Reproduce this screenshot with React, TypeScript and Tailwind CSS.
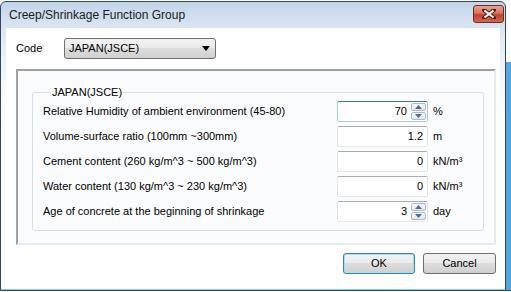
import React from 'react';

const BTN_BG = 'bg-[linear-gradient(#f2f2f2,#ebebeb_45%,#dddddd_50%,#cfcfcf)]';

type Row = { label: string; value: string; unit: string; spin?: boolean; focused?: boolean };

const ROWS: Row[] = [
  { label: 'Relative Humidity of ambient environment (45-80)', value: '70', unit: '%', spin: true, focused: true },
  { label: 'Volume-surface ratio (100mm ~300mm)', value: '1.2', unit: 'm' },
  { label: 'Cement content (260 kg/m^3 ~ 500 kg/m^3)', value: '0', unit: 'kN/m³' },
  { label: 'Water content (130 kg/m^3 ~ 230 kg/m^3)', value: '0', unit: 'kN/m³' },
  { label: 'Age of concrete at the beginning of shrinkage', value: '3', unit: 'day', spin: true },
];

function SpinButton({ up }: { up?: boolean }) {
  return (
    <div className="flex-1 flex items-center justify-center border border-[#b2bbc9] rounded-[2px] bg-[linear-gradient(#f7f8fa,#e3e7ee)]">
      <svg width="7" height="4" viewBox="0 0 7 4">
        {up ? <path d="M0 4 L3.5 0 L7 4 Z" fill="#4f6c96" /> : <path d="M0 0 L3.5 4 L7 0 Z" fill="#4f6c96" />}
      </svg>
    </div>
  );
}

function ValueBox({ row }: { row: Row }) {
  const border = row.focused
    ? 'border-[#a8cbe6] border-t-[#3d7bad]'
    : 'border-[#e2e3ea] border-t-[#abadb3] border-b-[#e3e9ef]';
  return (
    <div className="flex items-center gap-[5px]">
      <div className={`w-[91px] h-[21px] flex items-stretch bg-white border rounded-[2px] ${border}`}>
        <div className="flex-1 flex items-center justify-end pr-[4px]">{row.value}</div>
        {row.spin && (
          <div className="w-[16px] flex flex-col gap-[1px] py-[1px] pr-[1px]">
            <SpinButton up />
            <SpinButton />
          </div>
        )}
      </div>
      <span>{row.unit}</span>
    </div>
  );
}

export default function App() {
  return (
    <div
      className="w-[511px] h-[292px] bg-white overflow-hidden text-[11px] text-black flex"
      style={{ fontFamily: '"Liberation Sans", Arial, sans-serif' }}
    >
      <div className="w-[506px] h-[290px] mt-[1px] flex flex-col border border-[#33465c] rounded-t-[6px] bg-[linear-gradient(#c3d5ea,#dce7f4_28px,#eef3f9_60px,#ffffff_120px)]">
        {/* title bar */}
        <div className="h-[26px] flex items-center justify-between pl-[8px] pr-[1px]">
          <span className="text-[12px] text-[#1b1b1b]">Creep/Shrinkage Function Group</span>
          <div className="w-[31px] h-[18px] mb-[3px] flex items-center justify-center border border-[#6b2a22] rounded-[3px] bg-[linear-gradient(#e8a493,#d6745f_45%,#c4412a_55%,#d0684f)]">
            <svg width="14" height="10" viewBox="0 0 14 10">
              <path d="M2 1 L12 9 M12 1 L2 9" stroke="#5a1b12" strokeWidth="4" strokeLinecap="square" />
              <path d="M2.5 1.5 L11.5 8.5 M11.5 1.5 L2.5 8.5" stroke="#ffffff" strokeWidth="2.2" />
            </svg>
          </div>
        </div>

        {/* client area */}
        <div className="flex-1 mx-[5px] mb-[2px] bg-white flex flex-col px-[10px] pt-[10px]">
          <div className="flex items-center h-[21px]">
            <span className="w-[48px]">Code</span>
            <div className={`w-[152px] h-[21px] flex items-center justify-between pl-[4px] pr-[5px] border border-[#707070] rounded-[3px] ${BTN_BG}`}>
              <span>JAPAN(JSCE)</span>
              <svg width="8" height="5" viewBox="0 0 8 5">
                <path d="M0 0 L8 0 L4 5 Z" fill="#000" />
              </svg>
            </div>
          </div>

          <div className="mt-[10px] w-[480px] h-[176px] border-2 border-t-[#a0a0a0] border-l-[#a0a0a0] border-r-[#e4ecef] border-b-[#e4ecef] bg-[#fbfcfd] pl-[14px] pr-[10px] pt-[15px]">
            <fieldset className="border border-[#d5dfe5] rounded-[3px] h-[145px] pl-[10px] pr-[8px]">
              <legend className="px-[1px] ml-[8px] leading-[13px]">JAPAN(JSCE)</legend>
              <div className="flex flex-col gap-[4px] mt-[2px]">
                {ROWS.map((row) => (
                  <div key={row.label} className="flex items-center">
                    <span className="w-[294px]">{row.label}</span>
                    <ValueBox row={row} />
                  </div>
                ))}
              </div>
            </fieldset>
          </div>

          <div className="flex justify-end gap-[8px] mt-[8px] w-[480px]">
            <button className={`w-[72px] h-[21px] border border-[#3c7fb1] rounded-[3px] shadow-[inset_0_0_0_1px_#9fe3f9] ${BTN_BG}`}>OK</button>
            <button className={`w-[73px] h-[21px] border border-[#707070] rounded-[3px] ${BTN_BG}`}>Cancel</button>
          </div>
        </div>
        <div className="h-[1px] bg-[#7fd1f3]" />
      </div>
      {/* edge of the window behind */}
      <div className="w-[5px] mt-[62px] h-[229px] bg-[#55a6dc] border-b border-[#33465c]" />
    </div>
  );
}
